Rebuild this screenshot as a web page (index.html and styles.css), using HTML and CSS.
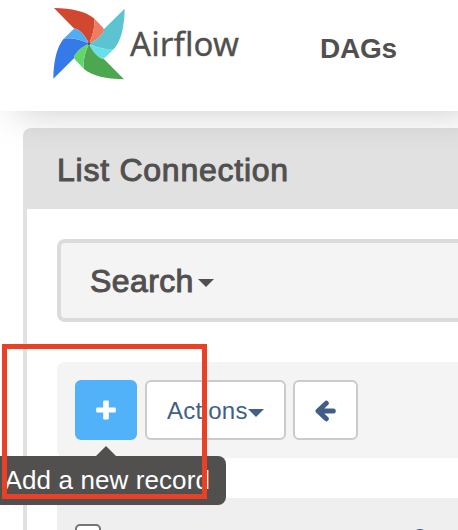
FILE: index.html
```html
<!DOCTYPE html>
<html lang="en">
<head>
<meta charset="utf-8">
<title>Airflow</title>
<link rel="stylesheet" href="styles.css">
</head>
<body>
<header class="navbar">
  <svg class="logo" viewBox="0 0 270 270" aria-hidden="true">
    <g>
      <path fill="#d2472f" d="M27 24C80 25 122 34 147 55C151 82 142 110 132 131C122 107 104 90 93 86L88 86Z"/>
      <path fill="#ef7b60" d="M147 55L173 82Q178 88 177 92C173 103 156 121 132 131C142 110 151 82 147 55Z"/>
    </g>
    <g transform="rotate(90 132 131)">
      <path fill="#5bc4d0" d="M27 24C80 25 122 34 147 55C151 82 142 110 132 131C122 107 104 90 93 86L88 86Z"/>
      <path fill="#67e0e9" d="M147 55L173 82Q178 88 177 92C173 103 156 121 132 131C142 110 151 82 147 55Z"/>
    </g>
    <g transform="rotate(180 132 131)">
      <path fill="#4da750" d="M27 24C80 25 122 34 147 55C151 82 142 110 132 131C122 107 104 90 93 86L88 86Z"/>
      <path fill="#60d66b" d="M147 55L173 82Q178 88 177 92C173 103 156 121 132 131C142 110 151 82 147 55Z"/>
    </g>
    <g transform="rotate(270 132 131)">
      <path fill="#367ae9" d="M27 24C80 25 122 34 147 55C151 82 142 110 132 131C122 107 104 90 93 86L88 86Z"/>
      <path fill="#51aef5" d="M147 55L173 82Q178 88 177 92C173 103 156 121 132 131C142 110 151 82 147 55Z"/>
    </g>
    <circle cx="132" cy="131" r="4" fill="#51504f"/>
  </svg>
  <span class="brand">Airflow</span>
  <span class="nav-link">DAGs</span>
</header>
<main class="panel">
  <h1 class="panel-heading">List Connection</h1>
  <div class="panel-body">
    <div class="search"><span class="search-label">Search</span><i class="caret"></i></div>
    <div class="toolbar">
      <div class="btn btn-add">
        <svg class="icon plus" viewBox="0 0 20 20"><path d="M8.2 .5h3.6q1 0 1 1v6h6q1 0 1 1v3q0 1-1 1h-6v6q0 1-1 1H8.2q-1 0-1-1v-6h-6q-1 0-1-1v-3q0-1 1-1h6v-6q0-1 1-1z"/></svg>
        <div class="tooltip">Add a new record</div>
      </div>
      <div class="btn btn-actions"><span class="actions-label">Actions</span><i class="caret"></i></div>
      <div class="btn btn-back">
        <svg class="icon arrow" viewBox="0 0 21 22"><path d="M11.3 3.2L3 11l8.3 7.8M4 11h14.3"/></svg>
      </div>
    </div>
    <div class="table-head">
      <span class="checkbox"></span>
      <span class="sort-link"></span>
    </div>
  </div>
</main>
<div class="highlight"></div>
</body>
</html>
```
FILE: styles.css
```css
* { box-sizing: border-box; }
html { overflow: hidden; }
body {
  margin: 0;
  width: 458px;
  height: 530px;
  overflow: hidden;
  position: relative;
  background: #fff;
  color: #51504f;
  font-family: "Liberation Sans", Arial, sans-serif;
}
.navbar {
  height: 111px;
  display: flex;
  align-items: flex-start;
  padding-left: 45px;
  background: #fff;
  position: relative;
  z-index: 2;
  box-shadow: 16px 2px 36px rgba(0, 0, 0, .2);
}
.logo { width: 90px; height: 90px; flex: none; }
.brand {
  width: 190px;
  margin-left: -5px;
  padding-top: 21px;
  font: 33px/45px "Noto Sans", sans-serif;
  letter-spacing: .1px;
  -webkit-text-stroke: .3px #51504f;
}
.nav-link {
  padding-top: 33px;
  font-size: 28px;
  line-height: 32px;
  font-weight: 700;
  letter-spacing: -.2px;
}
.panel {
  margin: 17px 0 0 23px;
  width: 435px;
  height: 402px;
  border: 4px solid #e1e1e1;
  border-right: 0;
  border-bottom: 0;
  border-radius: 8px 0 0 0;
}
.panel-heading {
  margin: 0;
  height: 77px;
  padding: 20px 0 0 30px;
  background: #e1e1e1;
  font-size: 32px;
  line-height: 37px;
  font-weight: 400;
  letter-spacing: .75px;
  -webkit-text-stroke: 1px #51504f;
}
.panel-body { padding: 30px 0 0 30px; }
.search {
  height: 83px;
  display: flex;
  align-items: center;
  padding-left: 29px;
  border: 4px solid #dbdbdb;
  border-right: 0;
  border-radius: 8px 0 0 8px;
  background: #f4f4f4;
}
.search-label {
  width: 108px;
  padding-top: 2px;
  font-size: 32px;
  letter-spacing: .4px;
  -webkit-text-stroke: 1px #51504f;
}
.caret {
  border: 8px solid transparent;
  border-top-color: currentColor;
  border-bottom: 0;
}
.search .caret { margin-top: 5px; }
.toolbar {
  height: 96px;
  margin-top: 40px;
  padding: 18px;
  display: flex;
  background: #f4f4f4;
  border-radius: 8px 0 0 8px;
}
.btn {
  height: 60px;
  display: flex;
  align-items: center;
  border: 2px solid #cbcbcb;
  border-radius: 6px;
  background: #fff;
  color: #415f86;
}
.btn-add {
  position: relative;
  width: 62px;
  margin-right: 8px;
  justify-content: center;
  border-color: #52b2f9;
  background: #52b2f9;
}
.btn-actions { width: 141px; margin-right: 7px; padding-left: 20px; font-size: 24px; }
.actions-label { width: 81px; padding-top: 2px; letter-spacing: .3px; }
.btn-actions .caret { margin-top: 5px; }
.btn-back { width: 65px; justify-content: center; }
.plus { width: 20px; height: 20px; fill: #fff; }
.arrow {
  width: 21px;
  height: 22px;
  margin-top: 2px;
  fill: none;
  stroke: currentColor;
  stroke-width: 5;
  stroke-linecap: round;
  stroke-linejoin: round;
}
.tooltip {
  position: absolute;
  left: -91px;
  top: 74px;
  width: 240px;
  height: 49px;
  padding-right: 16px;
  border-radius: 8px;
  background: #51504f;
  color: #fff;
  font-size: 26px;
  line-height: 49px;
  letter-spacing: .1px;
  text-align: right;
  white-space: nowrap;
}
.tooltip::before {
  content: "";
  position: absolute;
  left: 110px;
  top: -10px;
  border: 10px solid transparent;
  border-bottom-color: #51504f;
  border-top: 0;
}
.table-head {
  height: 32px;
  margin-top: 40px;
  padding: 26px 0 0 18px;
  display: flex;
  align-items: flex-start;
  overflow: hidden;
  background: #efefef;
}
.checkbox {
  width: 26px;
  height: 26px;
  border: 2px solid #767676;
  border-radius: 5px;
  background: #fff;
}
.sort-link {
  width: 16px;
  height: 16px;
  margin: 5px 0 0 311px;
  border: 3px solid #415f86;
  border-radius: 50%;
}
.highlight {
  position: absolute;
  z-index: 3;
  left: 2px;
  top: 344px;
  width: 205px;
  height: 155px;
  border: 5px solid #ea4025;
}
```
